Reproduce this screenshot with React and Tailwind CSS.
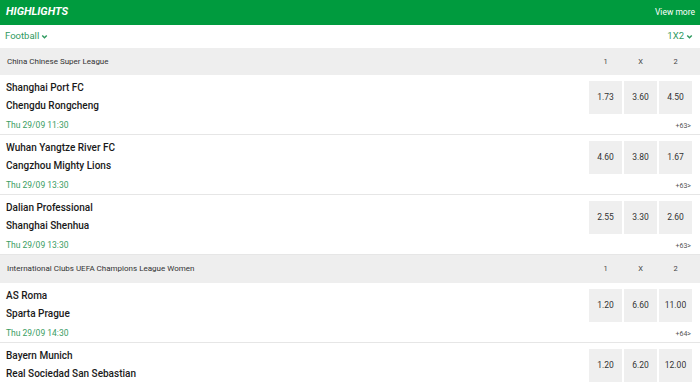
import React from "react";

const Chevron = ({ className = "" }) => (
  <svg viewBox="0 0 10 10" className={className} fill="none" stroke="currentColor" strokeWidth="1.6">
    <path d="M2.5 3.8 L5 6.3 L7.5 3.8" />
  </svg>
);

const leagues = [
  {
    name: "China Chinese Super League",
    matches: [
      { t1: "Shanghai Port FC", t2: "Chengdu Rongcheng", date: "Thu 29/09 11:30", odds: ["1.73", "3.60", "4.50"], more: "+63" },
      { t1: "Wuhan Yangtze River FC", t2: "Cangzhou Mighty Lions", date: "Thu 29/09 13:30", odds: ["4.60", "3.80", "1.67"], more: "+63" },
      { t1: "Dalian Professional", t2: "Shanghai Shenhua", date: "Thu 29/09 13:30", odds: ["2.55", "3.30", "2.60"], more: "+63" },
    ],
  },
  {
    name: "International Clubs UEFA Champions League Women",
    matches: [
      { t1: "AS Roma", t2: "Sparta Prague", date: "Thu 29/09 14:30", odds: ["1.20", "6.60", "11.00"], more: "+64" },
      { t1: "Bayern Munich", t2: "Real Sociedad San Sebastian", date: "Thu 29/09 14:30", odds: ["1.20", "6.20", "12.00"], more: "+64" },
    ],
  },
];

function Match({ m }) {
  return (
    <div className="flex h-[60px] shrink-0 border-b border-[#e6e6e6] bg-white">
      <div className="flex-1 flex flex-col pl-[6px] pt-[4px]">
        <div className="h-[18px] leading-[18px] text-[10px] font-medium text-[#1a1a1a]">{m.t1}</div>
        <div className="h-[18px] leading-[18px] text-[10px] font-medium text-[#1a1a1a]">{m.t2}</div>
        <div className="mt-[3px] h-[14px] leading-[14px] text-[8.5px] text-[#3a9d63]">{m.date}</div>
      </div>
      <div className="flex flex-col items-end pr-[8px] pt-[6px]">
        <div className="flex gap-[2px]">
          {m.odds.map((o, i) => (
            <div key={i} className="w-[33px] h-[33px] bg-[#efefef] flex items-center justify-center text-[8.5px] text-[#333]">
              {o}
            </div>
          ))}
        </div>
        <div className="mt-[7px] h-[10px] leading-[10px] text-[7px] text-[#555] pr-[1px]">{m.more}&gt;</div>
      </div>
    </div>
  );
}

export default function App() {
  return (
    <div className="w-[700px] h-[382px] overflow-hidden bg-white" style={{ fontFamily: "Roboto, 'Liberation Sans', sans-serif" }}>
      <div className="h-[25px] bg-[#009b3e] flex items-center justify-between pl-[6px] pr-[5px]">
        <span className="text-[11px] font-bold italic text-white">HIGHLIGHTS</span>
        <span className="text-[8.5px] text-white">View more</span>
      </div>
      <div className="h-[23px] flex items-center justify-between pl-[5px] pr-[6px] text-[#2f9a5f]">
        <span className="flex items-center text-[9.5px]">
          Football
          <Chevron className="w-[9px] h-[9px] ml-[1px]" />
        </span>
        <span className="flex items-center text-[9.5px]">
          1X2
          <Chevron className="w-[9px] h-[9px] ml-[1px]" />
        </span>
      </div>
      {leagues.map((l, li) => (
        <div key={li}>
          <div className={`${li === 0 ? "h-[27px]" : "h-[28px]"} bg-[#eeeeee] flex items-center justify-between pl-[7px] pr-[8px]`}>
            <span className="text-[8px] text-[#333]">{l.name}</span>
            <div className="flex gap-[2px] text-[7.5px] text-[#444]">
              <span className="w-[33px] text-center">1</span>
              <span className="w-[33px] text-center">X</span>
              <span className="w-[33px] text-center">2</span>
            </div>
          </div>
          {l.matches.map((m, mi) => (
            <Match key={mi} m={m} />
          ))}
        </div>
      ))}
    </div>
  );
}
